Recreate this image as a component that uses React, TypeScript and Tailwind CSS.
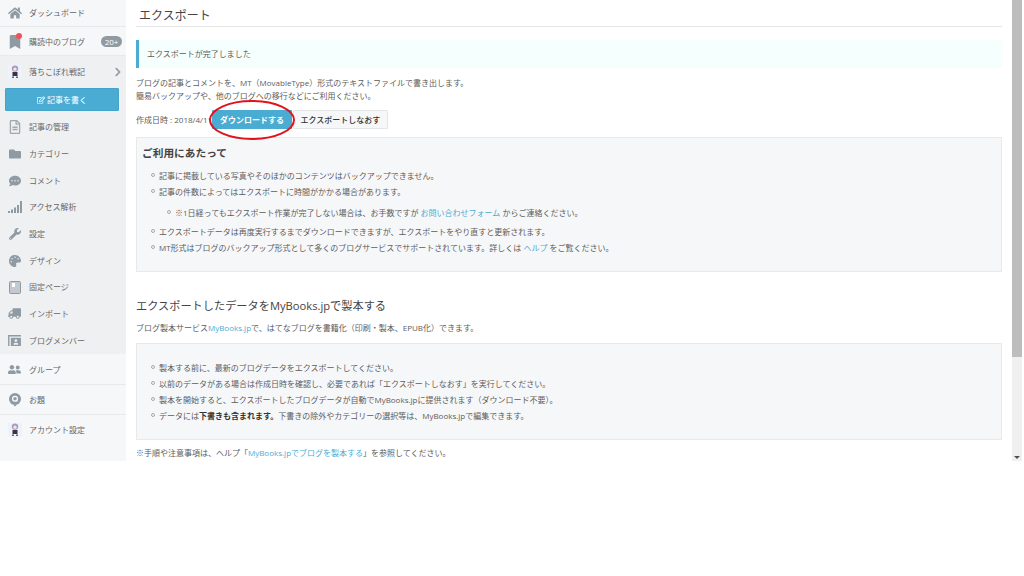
import {
  FaHome,
  FaBookmark,
  FaChevronRight,
  FaRegEdit,
  FaRegFileAlt,
  FaFolder,
  FaCommentDots,
  FaWrench,
  FaPalette,
  FaTruck,
  FaUserFriends,
} from "react-icons/fa";
import type { ReactNode } from "react";

const Avatar = () => (
  <svg viewBox="0 0 14 14" className="w-[14px] h-[14px]">
    <rect width="14" height="14" fill="#eef2fa" />
    <circle cx="7" cy="3.6" r="3.2" fill="#a99ac9" />
    <circle cx="7" cy="4.2" r="1.6" fill="#f4e6e0" />
    <rect x="4.5" y="7" width="5" height="4" fill="#3a3340" />
    <rect x="4" y="11.5" width="2" height="1.5" fill="#666" />
    <rect x="8" y="11.5" width="2" height="1.5" fill="#666" />
  </svg>
);

const SignalIcon = () => (
  <svg viewBox="0 0 14 12" className="w-[14px] h-[12px]" fill="#8f9aa3">
    <rect x="0" y="10" width="2" height="2" />
    <rect x="3" y="8.5" width="2" height="3.5" />
    <rect x="6" y="6.5" width="2" height="5.5" />
    <rect x="9" y="4" width="2" height="8" />
    <rect x="12" y="0" width="2" height="12" />
  </svg>
);

const PageIcon = () => (
  <svg viewBox="0 0 12 13" className="w-[12px] h-[13px]">
    <rect x="0.5" y="0.5" width="11" height="12" rx="1" fill="#c3c9ce" stroke="#8f9aa3" />
    <path d="M3 2h3v4H3z" fill="#fff" />
  </svg>
);

const MemberIcon = () => (
  <svg viewBox="0 0 14 12" className="w-[13px] h-[11px]" fill="#8f9aa3">
    <path d="M0 0h14v1.5H1.5V12H0z" />
    <path d="M3 3h11v9H3z M8.5 4.5a1.5 1.5 0 100 3 1.5 1.5 0 000-3z M6 10.5h5v-1.2c-1-1.2-4-1.2-5 0z" fillRule="evenodd" />
  </svg>
);

const QuestionIcon = () => (
  <svg viewBox="0 0 12 14" className="w-[12px] h-[14px]">
    <circle cx="6" cy="6" r="6" fill="#8f9aa3" />
    <path d="M4 11.5h4l-2 2z" fill="#8f9aa3" />
    <circle cx="6" cy="5.7" r="2.4" fill="none" stroke="#fff" strokeWidth="1.2" />
    <path d="M6.8 6.8l1.5 1.5" stroke="#fff" strokeWidth="1.1" />
  </svg>
);

const gray = "text-[#8f9aa3]";

const menuItems: { label: string; icon: ReactNode }[] = [
  { label: "記事の管理", icon: <FaRegFileAlt className="text-[#a0a9b0] text-[14px]" /> },
  { label: "カテゴリー", icon: <FaFolder className={`${gray} text-[12px]`} /> },
  { label: "コメント", icon: <FaCommentDots className={`${gray} text-[12px]`} /> },
  { label: "アクセス解析", icon: <SignalIcon /> },
  { label: "設定", icon: <FaWrench className={`${gray} text-[12px]`} /> },
  { label: "デザイン", icon: <FaPalette className={`${gray} text-[12px]`} /> },
  { label: "固定ページ", icon: <PageIcon /> },
  { label: "インポート", icon: <FaTruck className={`${gray} text-[13px] -scale-x-100`} /> },
  { label: "ブログメンバー", icon: <MemberIcon /> },
];

function Sidebar() {
  return (
    <aside className="w-[126px] shrink-0 bg-[#f6f7f9] text-[8px] leading-[12px] text-[#666]">
      <div className="h-[27px] pb-[1px] flex items-center border-b border-[#e8e9eb]">
        <span className="w-[29px] flex justify-center">
          <FaHome className={`${gray} text-[14px]`} />
        </span>
        <span>ダッシュボード</span>
      </div>
      <div className="h-[29px] pt-[1px] flex items-center border-b border-[#e8e9eb]">
        <span className="w-[29px] flex justify-center relative">
          <FaBookmark className={`${gray} text-[14px]`} />
          <span className="absolute left-[16px] top-[-2px] w-[6px] h-[6px] rounded-full bg-[#f0525a]" />
        </span>
        <span>購読中のブログ</span>
        <span className="ml-auto mr-[4px] w-[21px] h-[11px] rounded-full bg-[#8f9aa3] text-white text-[8px] leading-[11px] text-center">
          20+
        </span>
      </div>
      <div className="bg-[#eff0f2] h-[298px]">
        <div className="h-[32px] flex items-center">
          <span className="w-[29px] flex justify-center">
            <Avatar />
          </span>
          <span>落ちこぼれ戦記</span>
          <FaChevronRight className={`${gray} text-[10px] ml-auto mr-[3px]`} />
        </div>
        <button className="mx-[5px] w-[114px] h-[23px] bg-[#4bacd3] rounded-[1px] text-white text-[8px] flex items-center justify-center gap-[2px] border border-[#45a3c9]">
          <FaRegEdit className="text-[8px]" />
          記事を書く
        </button>
        <ul className="mt-[3px]">
          {menuItems.map((item) => (
            <li key={item.label} className="h-[26.67px] flex items-center">
              <span className="w-[29px] flex justify-center">{item.icon}</span>
              <span>{item.label}</span>
            </li>
          ))}
        </ul>
      </div>
      <div className="h-[31px] pt-[1px] flex items-center border-b border-[#e8e9eb]">
        <span className="w-[29px] flex justify-center">
          <FaUserFriends className={`${gray} text-[13px]`} />
        </span>
        <span>グループ</span>
      </div>
      <div className="h-[30px] flex items-center border-b border-[#e8e9eb]">
        <span className="w-[29px] flex justify-center">
          <QuestionIcon />
        </span>
        <span>お題</span>
      </div>
      <div className="h-[30px] flex items-center">
        <span className="w-[29px] flex justify-center">
          <Avatar />
        </span>
        <span>アカウント設定</span>
      </div>
    </aside>
  );
}

const A = ({ children }: { children: ReactNode }) => (
  <a className="text-[#4bacd3]">{children}</a>
);

const Note = () => <span className="font-['Noto_Sans_CJK_JP',sans-serif]">※</span>;

const Bullet = ({ children, className = "" }: { children: ReactNode; className?: string }) => (
  <li className={`flex items-center h-[16px] ${className}`}>
    <span className="w-[4px] h-[4px] rounded-full border border-[#aaa] mr-[5px] shrink-0" />
    <span className="-ml-[1px]">{children}</span>
  </li>
);

function Main() {
  return (
    <main className="flex-1 min-w-0 pl-[10px] pr-[10px] text-[8px] leading-[13px] text-[#5c5c5c]">
      <h1 className="h-[27px] pl-[3px] text-[12px] leading-[31px] text-[#444] border-b border-[#e5e5e5]">
        エクスポート
      </h1>
      <div className="mt-[13px] h-[28px] pb-[1px] border-l-[3px] border-[#4bacd3] bg-[#f5fffe] pl-[8px] flex items-center">
        エクスポートが完了しました
      </div>
      <p className="mt-[8px]">ブログの記事とコメントを、MT（MovableType）形式のテキストファイルで書き出します。</p>
      <p>簡易バックアップや、他のブログへの移行などにご利用ください。</p>
      <div className="mt-[8px] h-[19px] flex items-center relative">
        <span className="w-[76px] whitespace-nowrap overflow-hidden">作成日時 : 2018/4/11</span>
        <button className="w-[80px] h-[19px] bg-[#4bacd3] text-white font-bold rounded-[1px]">
          ダウンロードする
        </button>
        <button className="ml-[1px] w-[95px] h-[19px] bg-[#f6f7f9] border border-[#e5e6e8] text-[#333] font-medium rounded-[1px]">
          エクスポートしなおす
        </button>
        <svg viewBox="0 0 88 42" className="absolute left-[72px] top-[-11px] w-[88px] h-[42px]">
          <ellipse cx="44" cy="21" rx="42" ry="19" fill="none" stroke="#e0141c" strokeWidth="2" />
        </svg>
      </div>
      <section className="mt-[8px] h-[135px] bg-[#f6f7f9] border border-[#e8e9eb] pl-[5px] pt-[7px]">
        <h3 className="text-[10.7px] leading-[16px] font-bold text-[#444]">ご利用にあたって</h3>
        <ul className="mt-[6px] pl-[9px]">
          <Bullet>記事に掲載している写真やそのほかのコンテンツはバックアップできません。</Bullet>
          <Bullet>記事の件数によってはエクスポートに時間がかかる場合があります。</Bullet>
          <Bullet className="ml-[16px] mt-[4px] mb-[2px] h-[18px]">
            <Note />1日経ってもエクスポート作業が完了しない場合は、お手数ですが <A>お問い合わせフォーム</A> からご連絡ください。
          </Bullet>
          <Bullet>エクスポートデータは再度実行するまでダウンロードできますが、エクスポートをやり直すと更新されます。</Bullet>
          <Bullet>MT形式はブログのバックアップ形式として多くのブログサービスでサポートされています。詳しくは <A>ヘルプ</A> をご覧ください。</Bullet>
        </ul>
      </section>
      <h2 className="mt-[25px] text-[11.2px] leading-[18px] text-[#444]">エクスポートしたデータをMyBooks.jpで製本する</h2>
      <p className="mt-[6px]">ブログ製本サービス<A>MyBooks.jp</A>で、はてなブログを書籍化（印刷・製本、EPUB化）できます。</p>
      <section className="mt-[9px] h-[97px] bg-[#f6f7f9] border border-[#e8e9eb] pl-[14px] pt-[15px]">
        <ul>
          <Bullet>製本する前に、最新のブログデータをエクスポートしてください。</Bullet>
          <Bullet>以前のデータがある場合は作成日時を確認し、必要であれば「エクスポートしなおす」を実行してください。</Bullet>
          <Bullet>製本を開始すると、エクスポートしたブログデータが自動でMyBooks.jpに提供されます（ダウンロード不要）。</Bullet>
          <Bullet>
            データには<b className="text-[#333]">下書きも含まれます。</b>下書きの除外やカテゴリーの選択等は、MyBooks.jpで編集できます。
          </Bullet>
        </ul>
      </section>
      <p className="mt-[6px]"><Note />手順や注意事項は、ヘルプ「<A>MyBooks.jpでブログを製本する</A>」を参照してください。</p>
    </main>
  );
}

export default function App() {
  return (
    <div className="w-[1024px] h-[576px] bg-white overflow-hidden font-['Open_Sans','Noto_Sans_CJK_JP',sans-serif]">
      <div className="h-[461px] flex overflow-hidden">
        <Sidebar />
        <Main />
        <div className="w-[12px] shrink-0 flex flex-col pr-[2px]">
          <div className="h-[357px] bg-[#bdbdbd]" />
          <div className="flex-1 bg-[#f0f0f0] flex items-end justify-center pb-[2px]">
            <span className="w-0 h-0 border-x-[3px] border-x-transparent border-t-[3px] border-t-[#505050]" />
          </div>
        </div>
      </div>
    </div>
  );
}
